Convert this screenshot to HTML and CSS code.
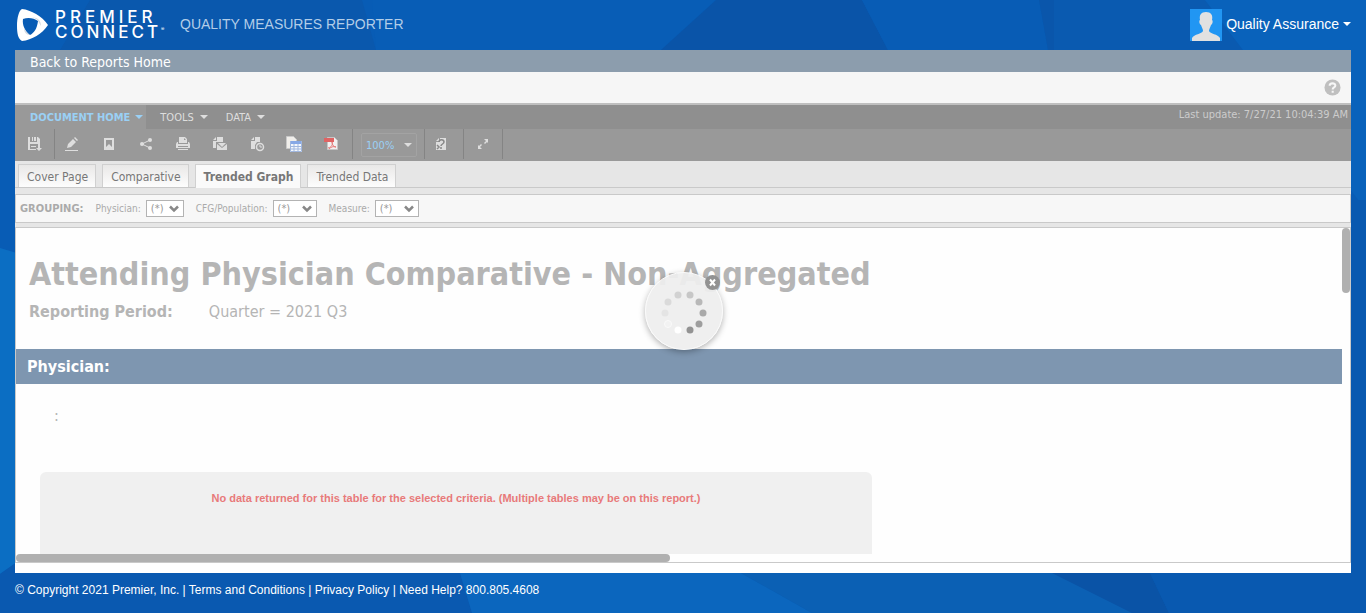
FILE: index.html
```html
<!DOCTYPE html>
<html lang="en">
<head>
<meta charset="utf-8">
<title>Quality Measures Reporter</title>
<link rel="stylesheet" href="styles.css">
</head>
<body>
<svg class="backdrop" viewBox="0 0 1366 613" preserveAspectRatio="none" aria-hidden="true">
  <rect width="1366" height="613" fill="#085cb5"/>
  <path d="M60 50 90 0H362L376 50Z" fill="#0a58ad"/>
  <path d="M372 0H716L661 50H376Z" fill="#085db6"/>
  <path d="M716 0H862L888 50H661Z" fill="#0a54a8"/>
  <path d="M862 0H1039L1048 50H888Z" fill="#085cb5"/>
  <path d="M1039 0H1054V50H1048Z" fill="#0a56ab"/>
  <path d="M1054 0H1205L1243 50H1054Z" fill="#0a5ab0"/>
  <path d="M1205 0H1366V210L1243 50Z" fill="#0962bb"/>
  <path d="M0 248 20 254V560L0 574Z" fill="#0b6ec3"/>
  <path d="M0 574 20 560V573H460L472 613H0Z" fill="#0a59b0"/>
  <path d="M460 573H741L812 613H472Z" fill="#0b66be"/>
  <path d="M741 573H1052L1132 613H812Z" fill="#0b60b4"/>
  <path d="M1052 573H1150L1169 613H1132Z" fill="#0a53a6"/>
  <path d="M1351 200H1366V613H1169L1150 573H1351Z" fill="#0959b0"/>
</svg>
<div class="page">
  <header class="header">
    <svg class="logo" viewBox="0 0 32 33" role="img" aria-label="Premier">
      <path fill="#fff" fill-rule="evenodd" d="M5 0C14 1 25 7 31 16C25 25 15 31 5 32C1 30 0 24 0 17C0 9 2 1 5 0ZM6 10C5 16 8 22 13 26C17 24 20 20 21 12C17 9 11 8 6 10Z"/>
      <path fill="#b9c3ce" d="M15 8.500C18 9 20 10 21 12L24 17C24 11 20 8 15 8.500ZM13 26C10 24 8 21 7 19C7 23 9 26 13 26Z" opacity=".6"/>
    </svg>
    <div class="brand"><span class="premier">PREMIER</span><span class="connect">CONNECT<sup>®</sup></span></div>
    <h1 class="app-name">QUALITY MEASURES REPORTER</h1>
    <button class="user" type="button">
      <svg class="avatar" viewBox="0 0 32 32" aria-hidden="true"><path fill="#2196f3" d="M0 0h32v32H0z"/><path fill="#e1e1e1" d="M16 3c5 0 7 3 6 8 1 0 1 4-1 5-1 3-2 4-2 6 1 3 9 3 11 7v3H2v-3c2-4 10-4 11-7 0-2-1-3-2-6-2-1-2-5-1-5-1-5 1-8 6-8z"/></svg>
      <span>Quality Assurance</span><i class="caret"></i>
    </button>
  </header>
  <main class="panel">
    <nav class="back"><a href="#">Back to Reports Home</a></nav>
    <div class="helpbar">
      <button type="button" class="help" aria-label="Help"><svg viewBox="0 0 18 18"><circle cx="9" cy="9" r="8.5" fill="#bfbfbf"/><path d="M6 7.200C6 3.800 12 3.800 12 7C12 9 9.200 8.800 9.200 11M9.200 12.500v2" fill="none" stroke="#f6f6f6" stroke-width="2.200"/></svg></button>
    </div>
    <div class="menubar">
      <button type="button" class="menu active">DOCUMENT HOME<i class="caret"></i></button>
      <button type="button" class="menu">TOOLS<i class="caret"></i></button>
      <button type="button" class="menu">DATA<i class="caret"></i></button>
      <span class="updated">Last update: 7/27/21 10:04:39 AM</span>
    </div>
    <div class="toolbar">
      <div class="group first">
        <button type="button" aria-label="Save"><svg viewBox="0 0 16 16"><path fill="#dedede" d="M1 1h2v5h7V1h1l2 2v6h-2V8H3v5h6v1H1zM5 1h1v4H5zM7 1h2v4H7zM11 9h2v3h2l-3 3-3-3h2zM4 10h5v1H4z"/></svg></button>
      </div>
      <div class="group tools">
        <button type="button" aria-label="Edit"><svg viewBox="0 0 16 16"><path fill="#dedede" d="m11 1 3 3-1 1-3-3zM9 3l3 3-5 5-4 1 1-4zM1 14h13v1H1z"/></svg></button>
        <button type="button" aria-label="Bookmark"><svg viewBox="0 0 16 16"><path fill="#dedede" fill-rule="evenodd" d="M3 2h10v12H3zM5 4v7l3-3 3 3V4z"/></svg></button>
        <button type="button" aria-label="Share"><svg viewBox="0 0 16 16"><path d="M12 4 4 8l8 4" fill="none" stroke="#dedede"/><g fill="#dedede"><circle cx="12" cy="4" r="2"/><circle cx="4" cy="8" r="2"/><circle cx="12" cy="12" r="2"/></g></svg></button>
        <button type="button" aria-label="Print"><svg viewBox="0 0 16 16"><path fill="#dedede" fill-rule="evenodd" d="M4 1h6l2 2v4H4zM9 2v2h2zM2 6h1v2h10V6h1l1 2v4H1V8zM3 10v1h10v-1zM3 13h10v1H3z"/></svg></button>
        <button type="button" aria-label="Email"><svg viewBox="0 0 16 16"><path fill="#dedede" d="m1 4 3-3v3zM5 1h6v5H4v6H1V5h4zM5 8l5 4 5-4v6H5zM6 7h8l-4 4z"/></svg></button>
        <button type="button" aria-label="Schedule"><svg viewBox="0 0 16 16"><path fill="#dedede" d="m2 4 3-3v3zM6 1h5v5H8l-2 3v4H2V5h4z"/><circle cx="11" cy="11" r="3.500" fill="#999" stroke="#dedede" stroke-width="1.500"/><path d="M11 9v2h2" fill="none" stroke="#dedede"/></svg></button>
        <button type="button" aria-label="Export to Excel"><svg viewBox="0 0 16 16"><path fill="#f0eeea" stroke="#c9c9c9" d="M.5.500h7l3 3v9H.500z"/><path fill="#f4f7fc" d="M4 5h12v11H4z"/><path fill="#86a8e6" d="M4 5h12v3H4z"/><path d="M4.500 5v10.500h11V5M8 8v8M12 8v8M4 10.500h12M4 13h12" fill="none" stroke="#a0b7df"/></svg></button>
        <button type="button" aria-label="Export to PDF"><svg viewBox="0 0 16 16"><path fill="#f3f0f0" stroke="#c5c5c5" d="M4.500 1.500h7l3 3v9h-10z"/><path fill="#df6464" d="M1 2h10v4H1z"/><path d="M5 12c4-1 5-4 4-6 0 3 2 5 4 5-3-1-5 0-7 2" fill="none" stroke="#e77979"/></svg></button>
      </div>
      <div class="group scale">
        <button type="button" class="zoom"><span>100%</span><i class="caret"></i></button>
      </div>
      <div class="group prompts"><button type="button" aria-label="Prompts"><svg viewBox="0 0 16 16"><path fill="#dedede" d="m3 5 3-3v3zM7 2h6v12H3V6h4z"/><path d="M6 6c0-3 5-3 5 0 0 2-3 2-3 4M8 11v2M4 9l2 2-2 2" fill="none" stroke="#888" stroke-width="1.500"/></svg></button></div>
      <div class="group full"><button type="button" aria-label="Full screen"><svg viewBox="0 0 16 16"><path fill="#dedede" d="M9 3h4v4l-1-1-2 2-1-1 2-2zM7 13H3V9l1 1 2-2 1 1-2 2z"/></svg></button></div>
    </div>
    <nav class="tabs">
      <a href="#">Cover Page</a><a href="#">Comparative</a><a href="#" class="current">Trended Graph</a><a href="#">Trended Data</a>
    </nav>
    <form class="grouping">
      <strong>GROUPING:</strong>
      <label for="physician">Physician:</label>
      <span class="pick narrow"><select id="physician"><option>(*)</option></select><svg viewBox="0 0 10 8"><path d="m1 1.500 4 4 4-4" fill="none" stroke="#888" stroke-width="2.500"/></svg></span>
      <label for="population">CFG/Population:</label>
      <span class="pick"><select id="population"><option>(*)</option></select><svg viewBox="0 0 10 8"><path d="m1 1.500 4 4 4-4" fill="none" stroke="#888" stroke-width="2.500"/></svg></span>
      <label for="measure">Measure:</label>
      <span class="pick"><select id="measure"><option>(*)</option></select><svg viewBox="0 0 10 8"><path d="m1 1.500 4 4 4-4" fill="none" stroke="#888" stroke-width="2.500"/></svg></span>
    </form>
    <section class="report">
      <div class="content">
        <h2>Attending Physician Comparative - Non-Aggregated</h2>
        <p class="period"><b>Reporting Period:</b><span>Quarter = 2021 Q3</span></p>
        <h3>Physician:</h3>
        <p class="colon">:</p>
        <p class="empty">No data returned for this table for the selected criteria. (Multiple tables may be on this report.)</p>
      </div>
      <div class="vtrack"><div class="vthumb"></div></div>
      <div class="htrack"><div class="hthumb"></div></div>
    </section>
    <div class="wait" role="status" aria-label="Loading">
      <svg viewBox="0 0 76 76">
        <circle cx="32" cy="22" r="3.500" fill="#d2d2d2"/><circle cx="44" cy="22" r="3.500" fill="#c7c7c7"/><circle cx="53" cy="29" r="3.500" fill="#b8b8b8"/><circle cx="57" cy="40" r="3.500" fill="#a9a9a9"/><circle cx="53" cy="51" r="3.500" fill="#9e9e9e"/><circle cx="44" cy="57" r="3.500" fill="#939393"/><circle cx="32" cy="57" r="3.500" fill="#fff"/><circle cx="22" cy="51" r="3.500" fill="#f2f2f2" stroke="#fafafa"/><circle cx="19" cy="40" r="3.500" fill="#e4e4e4"/><circle cx="22" cy="29" r="3.500" fill="#dadada"/>
      </svg>
      <button type="button" class="cancel" aria-label="Cancel"><svg viewBox="0 0 15 15"><circle cx="7.500" cy="7.500" r="7.500" fill="#929292"/><path d="m5 4.500 5 6m0-6-5 6" stroke="#fff" stroke-width="2"/></svg></button>
    </div>
  </main>
  <footer class="footer">© Copyright 2021 Premier, Inc. | <a href="#">Terms and Conditions</a> | <a href="#">Privacy Policy</a> | Need Help? 800.805.4608</footer>
</div>
</body>
</html>
```
FILE: styles.css
```css
* { box-sizing: border-box; }
html, body { height: 100%; }
body { margin: 0; background: #085cb5; font-family: "DejaVu Sans Condensed", "Noto Sans", sans-serif; color: #fff; overflow: hidden; }
button { font: inherit; color: inherit; background: none; border: 0; padding: 0; }
a { color: inherit; text-decoration: none; }
h1, h2, h3, p { margin: 0; }
svg { display: block; }
.backdrop { position: absolute; inset: 0; width: 100%; height: 100%; z-index: -1; }
.page { display: flex; flex-direction: column; height: 100vh; padding: 0 15px; }
.caret { width: 0; height: 0; border: 4px solid transparent; border-top-color: currentColor; border-bottom: 0; }

.header { display: flex; align-items: center; height: 50px; flex: none; padding-bottom: 2px; font-family: "Liberation Sans", sans-serif; }
.logo { width: 32px; height: 33px; margin: 2px 0 0 2px; }
.brand { display: flex; flex-direction: column; margin: 2px 0 0 6px; width: 125px; font: 500 17px/15px Inter, sans-serif; }
.premier { letter-spacing: 4px; }
.connect { letter-spacing: 3px; }
.brand sup { font-size: 5px; line-height: 0; letter-spacing: 0; }
.app-name { font-size: 14px; font-weight: 400; color: #b2cde8; }
.user { display: flex; align-items: center; gap: 4px; margin-left: auto; font-size: 14px; }
.avatar { width: 32px; height: 32px; margin-top: 2px; }

.panel { position: relative; flex: 1; min-height: 0; display: flex; flex-direction: column; background: #e6e6e6; border-bottom: 10px solid #fff; }
.back { height: 22px; flex: none; padding-left: 15px; background: #8c9dad; font-size: 14px; line-height: 24px; }
.helpbar { display: flex; justify-content: flex-end; align-items: center; height: 33px; flex: none; padding-right: 10px; background: #f6f6f6; border-bottom: 2px solid #bfbfbf; }
.help { width: 17px; height: 17px; }
.menubar { display: flex; height: 24px; flex: none; background: #8f8f8f; color: #dedede; font-size: 11px; }
.menu { display: flex; align-items: center; gap: 6px; margin-right: 18px; }
.menu.active { gap: 5px; margin-right: 14px; padding: 0 3px 0 15px; background: #999; color: #9ad0f5; font-weight: 700; }
.updated { margin-left: auto; padding-right: 3px; line-height: 20px; color: #ccc; }
.toolbar { display: flex; height: 32px; flex: none; background: #999; }
.group { display: flex; align-items: center; height: 30px; border-right: 1px solid #848484; }
.group.first { padding: 0 11px 0 12px; }
.group.scale { padding: 2px 7px 0 8px; }
.group.prompts { padding: 0 14px 0 8px; }
.group.full { padding: 0 11px; }
.group svg { width: 16px; height: 16px; }
.tools { gap: 21px; padding: 0 13px 0 9px; }
.zoom { display: flex; align-items: center; justify-content: space-between; width: 56px; height: 24px; padding: 0 4px; border: 1px solid #a3a3a3; border-radius: 2px; font-size: 11px; color: #dedede; }
.zoom span { color: #9ad0f5; }

.tabs { display: flex; gap: 6px; align-items: flex-end; height: 27px; flex: none; padding: 0 3px; border-bottom: 1px solid #c9c9c9; font-size: 12px; line-height: 24px; color: #777; }
.tabs a { height: 23px; padding: 0 7px 0 8px; border: 1px solid #d0d0d0; border-bottom: 0; background: linear-gradient(#e9e8e7, #fdfdfd); }
.tabs .current { height: 24px; margin-bottom: -1px; background: #fafafa; font-weight: 700; }
.grouping { display: flex; align-items: center; height: 29px; flex: none; margin-top: 6px; padding-left: 4px; border: 1px solid #c9c9c9; background: #f7f7f7; color: #aaa; font-size: 11px; }
.grouping label { margin: 0 5px 0 12px; font-size: 10px; }
.pick { position: relative; width: 44px; }
.pick.narrow { width: 38px; }
.pick select { display: block; appearance: none; width: 100%; height: 17px; padding: 0 4px; border: 1px solid #b3b3b3; border-radius: 0; background: #fff; color: #999; font: inherit; }
.pick svg { position: absolute; right: 5px; top: 5px; width: 10px; height: 8px; pointer-events: none; }

.report { flex: 1; min-height: 0; display: grid; grid-template-columns: 1fr 8px; grid-template-rows: 1fr 8px; margin-top: 4px; border: 1px solid #c9c9c9; background: #fefefe; color: #b5b5b5; }
.content { overflow: hidden; }
.content h2 { padding: 24px 13px 0; font-size: 32px; line-height: 44px; }
.period { display: flex; gap: 36px; padding: 4px 13px 0; font-size: 16px; line-height: 24px; }
.content h3 { height: 35px; margin-top: 25px; padding-left: 11px; background: #7e96b0; color: #fff; font-size: 16px; line-height: 35px; }
.colon { padding: 20px 0 0 38px; font-size: 16px; line-height: 24px; }
.empty { width: 832px; height: 100px; margin: 44px 0 0 24px; border-radius: 6px; background: #f0f0f0; color: #e87a7a; font: 700 11px/52px "Liberation Sans", sans-serif; text-align: center; }
.vthumb { height: 65px; border-radius: 4px; background: #b0b0b0; }
.hthumb { width: 49.3%; height: 8px; border-radius: 4px; background: #b0b0b0; }
.wait { position: absolute; left: 50%; top: 222px; width: 78px; height: 78px; margin-left: -38px; border-radius: 50%; background: rgba(238,238,238,.93); border: 1px solid #fafafa; box-shadow: 0 2px 6px rgba(0,0,0,.3); }
.cancel { position: absolute; right: 2px; top: 2px; width: 15px; height: 15px; }
.footer { height: 40px; flex: none; font: 12px/34px "Liberation Sans", sans-serif; }
```
